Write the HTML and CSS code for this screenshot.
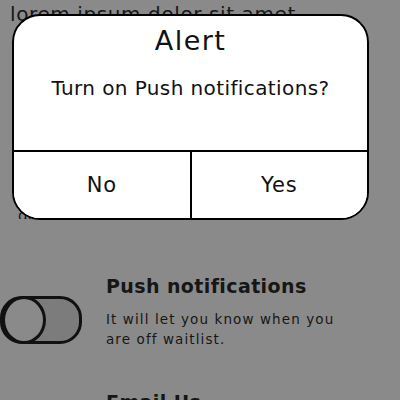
FILE: index.html
```html
<!DOCTYPE html>
<html lang="en">
<head>
    <meta charset="UTF-8">
    <meta name="viewport" content="width=device-width, initial-scale=1.0">
    <title>Settings</title>
    <link rel="stylesheet" href="styles.css">
</head>
<body>
    <div class="screen">
        <p class="intro">lorem ipsum dolor sit amet</p>
        <p class="body-text">consectetur adipiscing elit, sed do eiusmod tempor incididunt ut labore et dolore magna aliqua ut enim ad minim veniam quis nostrud exercitation ullamco laboris nisi ut aliquip ex ea commodo consequat duis aute irure dolor in reprehenderit in voluptate velit esse cillum dolore eu fugiat nulla pariatur excepteur sint occaecat cupidatat non proident sunt in culpa qui officia.</p>

        <div class="setting">
            <div class="toggle"><span class="knob"></span></div>
            <div class="setting-text">
                <h2>Push notifications</h2>
                <p>It will let you know when you are off waitlist.</p>
            </div>
        </div>

        <div class="setting">
            <div class="toggle"><span class="knob"></span></div>
            <div class="setting-text">
                <h2>Email Us</h2>
                <p>Send us a message about anything.</p>
            </div>
        </div>
    </div>

    <!-- Alert dialog over the page -->
    <div class="alert">
        <div class="alert-body">
            <h1>Alert</h1>
            <p>Turn on Push notifications?</p>
        </div>
        <div class="alert-actions">
            <button class="alert-btn">No</button>
            <button class="alert-btn">Yes</button>
        </div>
    </div>
</body>
</html>
```

FILE: styles.css
```css
body {
    margin: 0;
    padding: 0;
    font-family: "DejaVu Sans", sans-serif;
    background-color: #8a8a8a;
    color: #161616;
    width: 400px;
    height: 400px;
    overflow: hidden;
    position: relative;
}

.screen {
    padding: 0 30px 0 10px;
    margin-top: -1px;
}

.intro {
    margin: 0;
    font-size: 20px;
    line-height: 30px;
    letter-spacing: 0.6px;
}

.body-text {
    margin: 0;
    padding-left: 8px;
    font-size: 15px;
    line-height: 22px;
    height: 190px;
    overflow: hidden;
}

.setting {
    display: flex;
    align-items: flex-start;
    gap: 24px;
    margin-left: -10px;
    margin-top: 56px;
}

.setting + .setting {
    margin-top: 42px;
}

.toggle {
    width: 76px;
    height: 42px;
    border: 3px solid #111;
    border-radius: 22px;
    background-color: #7c7c7c;
    position: relative;
    flex-shrink: 0;
    margin-top: 21px;
}

.knob {
    position: absolute;
    left: -1px;
    top: -3px;
    width: 38px;
    height: 42px;
    border: 3px solid #111;
    border-radius: 50%;
    background-color: #8a8a8a;
}

.setting-text h2 {
    margin: 0 0 11px;
    font-size: 19px;
    font-weight: 700;
    line-height: 23px;
    letter-spacing: 0.4px;
}

.setting-text p {
    margin: 0;
    font-size: 13.5px;
    line-height: 20px;
    width: 236px;
    letter-spacing: 1.1px;
}

.alert {
    position: absolute;
    left: 12px;
    top: 14px;
    width: 353px;
    height: 202px;
    background-color: #fff;
    border: 2px solid #000;
    border-radius: 28px;
    display: flex;
    flex-direction: column;
    overflow: hidden;
    color: #111;
}

.alert-body {
    height: 134px;
    border-bottom: 2px solid #000;
    text-align: center;
}

.alert-body h1 {
    margin: 7px 0 0;
    font-size: 27px;
    font-weight: 400;
    line-height: 36px;
    letter-spacing: 1.4px;
}

.alert-body p {
    margin: 16px 0 0;
    font-size: 20px;
    line-height: 26px;
    letter-spacing: 0.4px;
}

.alert-actions {
    flex: 1;
    display: flex;
}

.alert-btn {
    flex: 1;
    border: none;
    background: #fff;
    font-family: inherit;
    font-size: 21px;
    letter-spacing: 0.8px;
    color: #111;
    padding: 0;
}

.alert-btn + .alert-btn {
    border-left: 2px solid #000;
}
```
